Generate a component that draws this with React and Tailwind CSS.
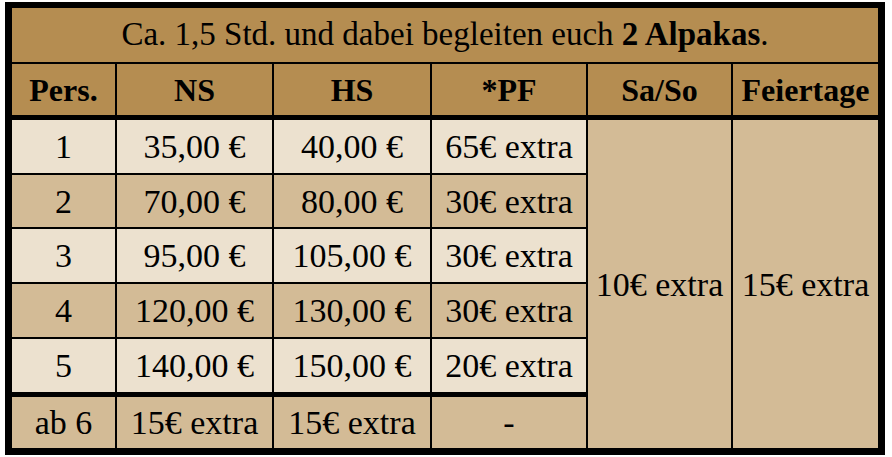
const rows = [
  { p: '1', ns: '35,00 €', hs: '40,00 €', pf: '65€ extra', light: true },
  { p: '2', ns: '70,00 €', hs: '80,00 €', pf: '30€ extra', light: false },
  { p: '3', ns: '95,00 €', hs: '105,00 €', pf: '30€ extra', light: true },
  { p: '4', ns: '120,00 €', hs: '130,00 €', pf: '30€ extra', light: false },
  { p: '5', ns: '140,00 €', hs: '150,00 €', pf: '20€ extra', light: true },
]

const cols = 'grid grid-cols-[103px_155px_156px_154px_143px_145px] gap-x-[2px]'

const Cell = ({ light, className = '', children }) => (
  <div
    className={
      'flex items-center justify-center whitespace-nowrap ' +
      (light ? 'bg-[#ece1cf] ' : 'bg-[#d3bb96] ') +
      className
    }
  >
    {children}
  </div>
)

export default function App() {
  return (
    <div className="min-h-[457px] bg-white pt-[2px] pl-[5px]">
      <div
        className="w-[880px] bg-black pt-[6px] px-[7px] pb-[7px] text-black"
        style={{ fontFamily: '"Liberation Serif", "DejaVu Serif", serif' }}
      >
        <div className="flex h-[54px] items-center justify-center bg-[#b58d51] text-[33px]">
          <span>
            Ca. 1,5 Std. und dabei begleiten euch <b>2 Alpakas</b>.
          </span>
        </div>

        <div className={cols + ' mt-[2px] h-[51px] text-[32px] font-bold'}>
          {['Pers.', 'NS', 'HS', '*PF', 'Sa/So', 'Feiertage'].map((h) => (
            <div key={h} className="flex items-center justify-center whitespace-nowrap bg-[#b58d51]">
              {h}
            </div>
          ))}
        </div>

        <div
          className={
            cols +
            ' mt-[5px] grid-rows-[53px_52px_53px_53px_53px_54px] gap-y-[2px] text-[34px]'
          }
        >
          {rows.map((r, i) => (
            <div key={r.p} className="contents">
              <Cell light={r.light}>{r.p}</Cell>
              <Cell light={r.light}>{r.ns}</Cell>
              <Cell light={r.light}>{r.hs}</Cell>
              <Cell light={r.light}>{r.pf}</Cell>
              {i === 0 ? (
                <>
                  <Cell className="row-span-6">10€ extra</Cell>
                  <Cell className="row-span-6">15€ extra</Cell>
                </>
              ) : null}
            </div>
          ))}
          <Cell className="mt-[3px]">ab 6</Cell>
          <Cell className="mt-[3px]">15€ extra</Cell>
          <Cell className="mt-[3px]">15€ extra</Cell>
          <Cell className="mt-[3px]">-</Cell>
        </div>
      </div>
    </div>
  )
}
